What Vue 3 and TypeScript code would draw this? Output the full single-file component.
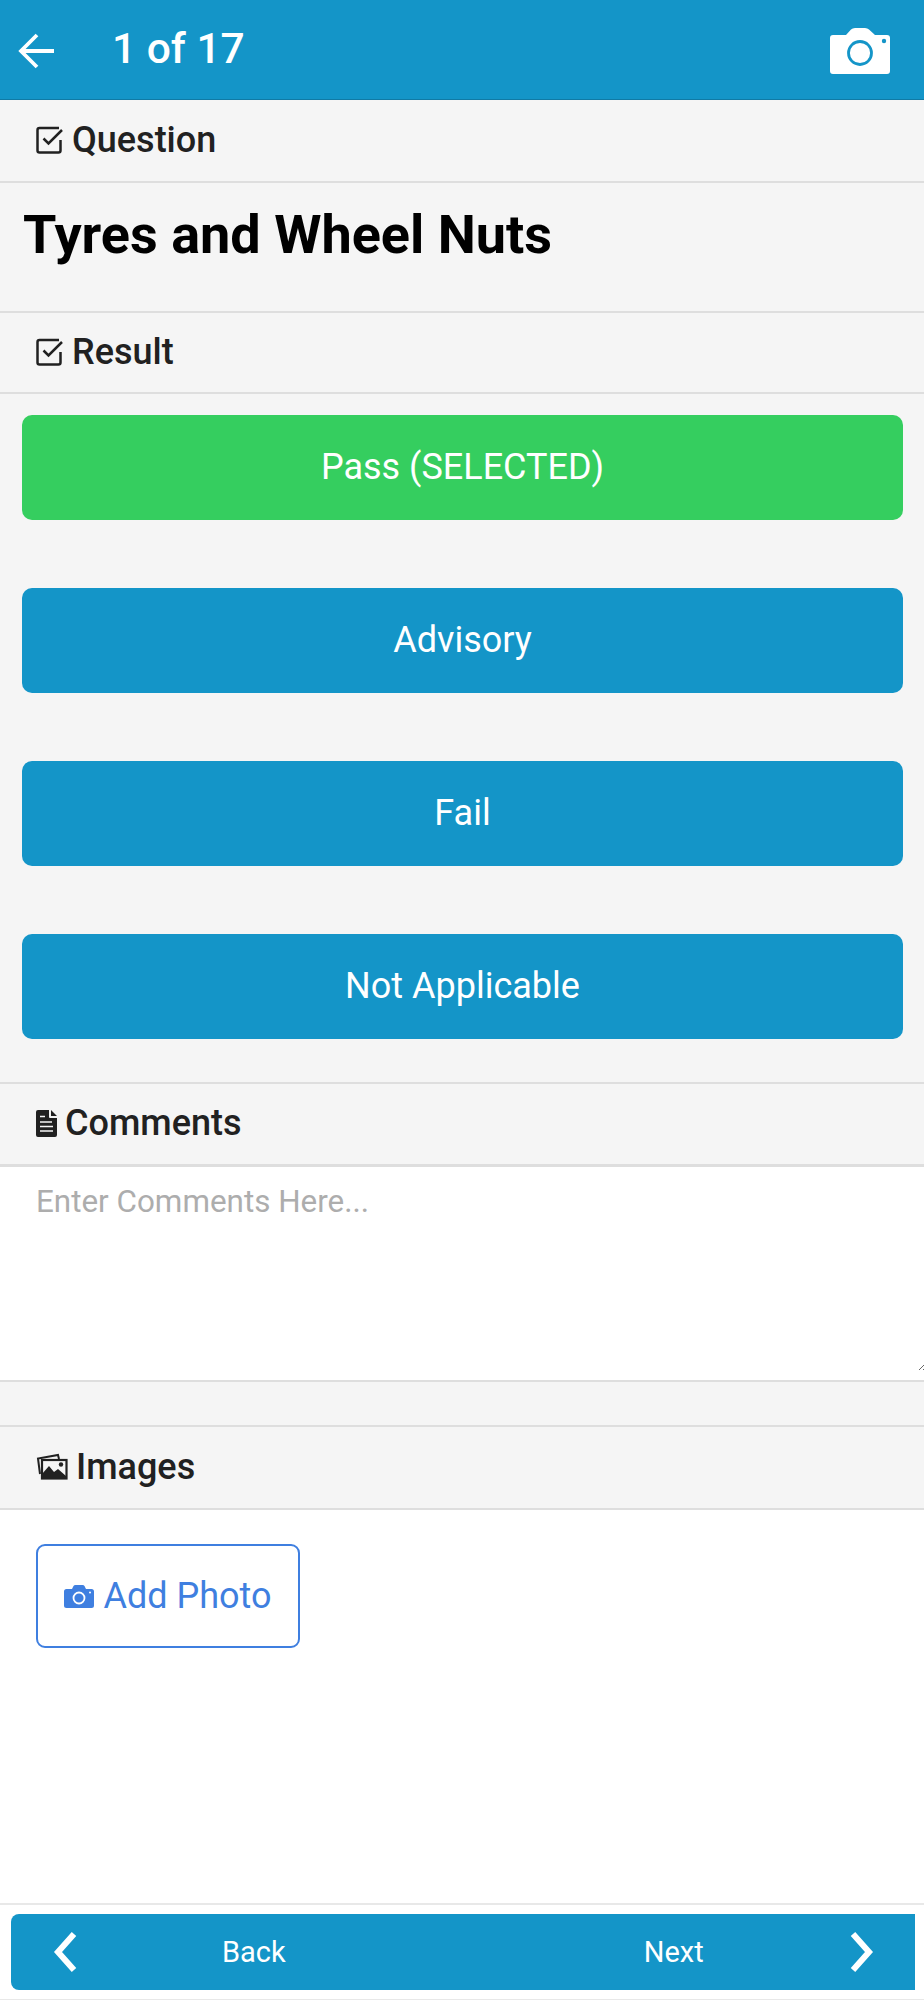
<script setup lang="ts">
const options: { label: string; selected: boolean }[] = [
  { label: 'Pass (SELECTED)', selected: true },
  { label: 'Advisory', selected: false },
  { label: 'Fail', selected: false },
  { label: 'Not Applicable', selected: false },
]
</script>

<template>
  <div class="page">
    <header class="topbar">
      <svg class="back-arrow" viewBox="0 0 38 36" width="38" height="36" aria-hidden="true">
        <path d="M36 18H3M19 2 3 18l16 16" fill="none" stroke="#fff" stroke-width="3.800" />
      </svg>
      <span class="counter">1 of 17</span>
      <svg class="top-camera" viewBox="0 0 60 46" width="60" height="46" aria-hidden="true">
        <path fill="#fff" d="M3 7h13l5-5.500Q22.500 0 25 0h10q2.500 0 4 1.500L45 7h12q3 0 3 3v33q0 3-3 3H3q-3 0-3-3V10q0-3 3-3z" />
        <circle cx="30" cy="25" r="11.500" fill="none" stroke="#1495c8" stroke-width="2.800" />
        <circle cx="54" cy="13" r="2.200" fill="#1495c8" />
      </svg>
    </header>

    <div class="section-head question-head">
      <svg class="icon-check" viewBox="0 0 28 28" width="28" height="28" aria-hidden="true">
        <path d="M24.500 14v10.500q0 2-2 2H3.500q-2 0-2-2V4q0-2 2-2H23" fill="none" stroke="#212121" stroke-width="2.500" />
        <path d="M7.500 12.500l5 5L26 4" fill="none" stroke="#212121" stroke-width="2.500" />
      </svg>
      <span>Question</span>
    </div>
    <h1 class="title">Tyres and Wheel Nuts</h1>

    <div class="section-head result-head">
      <svg class="icon-check" viewBox="0 0 28 28" width="28" height="28" aria-hidden="true">
        <path d="M24.500 14v10.500q0 2-2 2H3.500q-2 0-2-2V4q0-2 2-2H23" fill="none" stroke="#212121" stroke-width="2.500" />
        <path d="M7.500 12.500l5 5L26 4" fill="none" stroke="#212121" stroke-width="2.500" />
      </svg>
      <span>Result</span>
    </div>
    <div class="options">
      <button
        v-for="opt in options"
        :key="opt.label"
        type="button"
        class="option"
        :class="{ selected: opt.selected }"
      >{{ opt.label }}</button>
    </div>

    <div class="section-head comments-head">
      <svg viewBox="0 0 21 27" width="21" height="27" aria-hidden="true">
        <path fill="#212121" d="M2 0h11v7q0 1 1 1h7v17q0 2-2 2H2q-2 0-2-2V2q0-2 2-2zm13 0 6 6h-6z" />
        <path d="M4 6.500h5M4 12h12M4 16.500h13M4 21h13" stroke="#f5f5f5" stroke-width="1.500" />
      </svg>
      <span>Comments</span>
    </div>
    <div class="comment-box">
      <textarea class="comment-input" placeholder="Enter Comments Here..."></textarea>
    </div>
    <div class="spacer"></div>

    <div class="section-head images-head">
      <svg viewBox="0 0 32 28" width="32" height="28" aria-hidden="true">
        <path d="M4 21 2 5.500 22 2l1 4" fill="none" stroke="#212121" stroke-width="2" />
        <rect x="6" y="7" width="24.500" height="18.500" fill="none" stroke="#212121" stroke-width="2.200" />
        <path fill="#212121" d="M6 26v-5l7-8 5 6 4-3 8 7v3z" />
        <circle cx="25" cy="11.500" r="2.200" fill="#212121" />
      </svg>
      <span>Images</span>
    </div>
    <div class="images-body">
      <button type="button" class="add-photo">
        <svg viewBox="0 0 30 23" width="30" height="23" aria-hidden="true">
          <path fill="#3f7fe0" d="M2.500 4H8l1.500-3q.5-1 2-1h7q1.500 0 2 1L22 4h5.500Q30 4 30 6.500v14q0 2.500-2.500 2.500h-25Q0 23 0 20.500v-14Q0 4 2.500 4z" />
          <circle cx="15" cy="13" r="5.500" fill="none" stroke="#fff" stroke-width="1.800" />
          <circle cx="26" cy="7.500" r="1" fill="#fff" />
        </svg>
        <span>Add Photo</span>
      </button>
    </div>

    <footer class="footer">
      <div class="footer-bar">
        <svg class="chev chev-left" viewBox="0 0 26 42" width="26" height="42" aria-hidden="true">
          <path d="M22 3 6 21l16 18" fill="none" stroke="#fff" stroke-width="6" />
        </svg>
        <span class="foot-label back">Back</span>
        <span class="foot-label next">Next</span>
        <svg class="chev chev-right" viewBox="0 0 26 42" width="26" height="42" aria-hidden="true">
          <path d="M4 3l16 18L4 39" fill="none" stroke="#fff" stroke-width="6" />
        </svg>
      </div>
    </footer>
  </div>
</template>

<style scoped>
.page {
  width: 924px;
  height: 2000px;
  display: flex;
  flex-direction: column;
  background: #f5f5f5;
  font-family: Roboto, "Liberation Sans", sans-serif;
  overflow: hidden;
}
.topbar {
  height: 100px;
  box-sizing: border-box;
  flex: none;
  display: flex;
  align-items: center;
  background: #1495c8;
  border-bottom: 1px solid #107aa5;
  padding: 0 34px 0 18px;
  color: #fff;
}
.back-arrow {
  flex: none;
  margin-top: 2px;
}
.counter {
  margin-left: 56px;
  font-size: 42.5px;
  font-weight: 500;
  flex: 1;
  margin-top: -3px;
}
.top-camera {
  flex: none;
  margin-top: 2px;
}
.section-head {
  height: 83px;
  flex: none;
  box-sizing: border-box;
  display: flex;
  align-items: center;
  gap: 8px;
  padding: 0 0 2px 36px;
  border-bottom: 2px solid #dedede;
  font-size: 36px;
  font-weight: 500;
  color: #212121;
}
.result-head {
  height: 81px;
}
.title {
  margin: 0;
  height: 130px;
  flex: none;
  box-sizing: border-box;
  padding: 19px 0 0 23px;
  border-bottom: 2px solid #dedede;
  font-size: 54px;
  line-height: 66px;
  font-weight: 700;
  color: #000;
}
.options {
  height: 690px;
  flex: none;
  box-sizing: border-box;
  display: flex;
  flex-direction: column;
  gap: 68px;
  padding: 21px 21px 0 22px;
  border-bottom: 2px solid #dedede;
}
.option {
  height: 105px;
  flex: none;
  border: 0;
  border-radius: 10px;
  background: #1495c8;
  color: #fff;
  font-family: inherit;
  font-size: 36px;
  font-weight: 400;
  padding: 0 0 2px;
}
.option.selected {
  background: #35ce5f;
}
.comments-head {
  border-bottom-width: 3px;
}
.comment-box {
  height: 215px;
  flex: none;
  box-sizing: border-box;
  overflow: hidden;
  background: #fff;
  border-bottom: 2px solid #dedede;
}
.comment-input {
  display: block;
  width: 927px;
  height: 204px;
  box-sizing: border-box;
  border: 0;
  outline: 0;
  margin: 0;
  padding: 18px 36px;
  background: #fff;
  font-family: inherit;
  font-size: 31.4px;
  line-height: 34px;
  color: #212121;
}
.comment-input::placeholder {
  color: #adadad;
  opacity: 1;
}
.spacer {
  height: 45px;
  flex: none;
  box-sizing: border-box;
  border-bottom: 2px solid #dedede;
}
.images-body {
  flex: 1;
  min-height: 0;
  background: #fff;
  padding: 34px 36px 0;
}
.add-photo {
  width: 264px;
  height: 104px;
  box-sizing: border-box;
  display: flex;
  align-items: center;
  justify-content: center;
  gap: 9px;
  padding: 0;
  background: #fff;
  border: 2px solid #3f7fe0;
  border-radius: 9px;
  color: #3f7fe0;
  font-family: inherit;
  font-size: 36px;
}
.footer {
  height: 97px;
  flex: none;
  box-sizing: border-box;
  background: #fff;
  border-top: 2px solid #e8e8e8;
  border-bottom: 1px solid #e8e8e8;
  padding: 9px 9px 8px 11px;
}
.footer-bar {
  height: 76px;
  display: flex;
  align-items: center;
  background: #1495c8;
  border-radius: 8px 0 0 8px;
  color: #fff;
  padding: 0 40px 0 41px;
}
.chev {
  flex: none;
}
.foot-label {
  font-size: 29px;
  text-align: center;
}
.back {
  margin-left: 144px;
}
.next {
  margin-left: 358px;
}
.chev-right {
  margin-left: auto;
}
</style>
